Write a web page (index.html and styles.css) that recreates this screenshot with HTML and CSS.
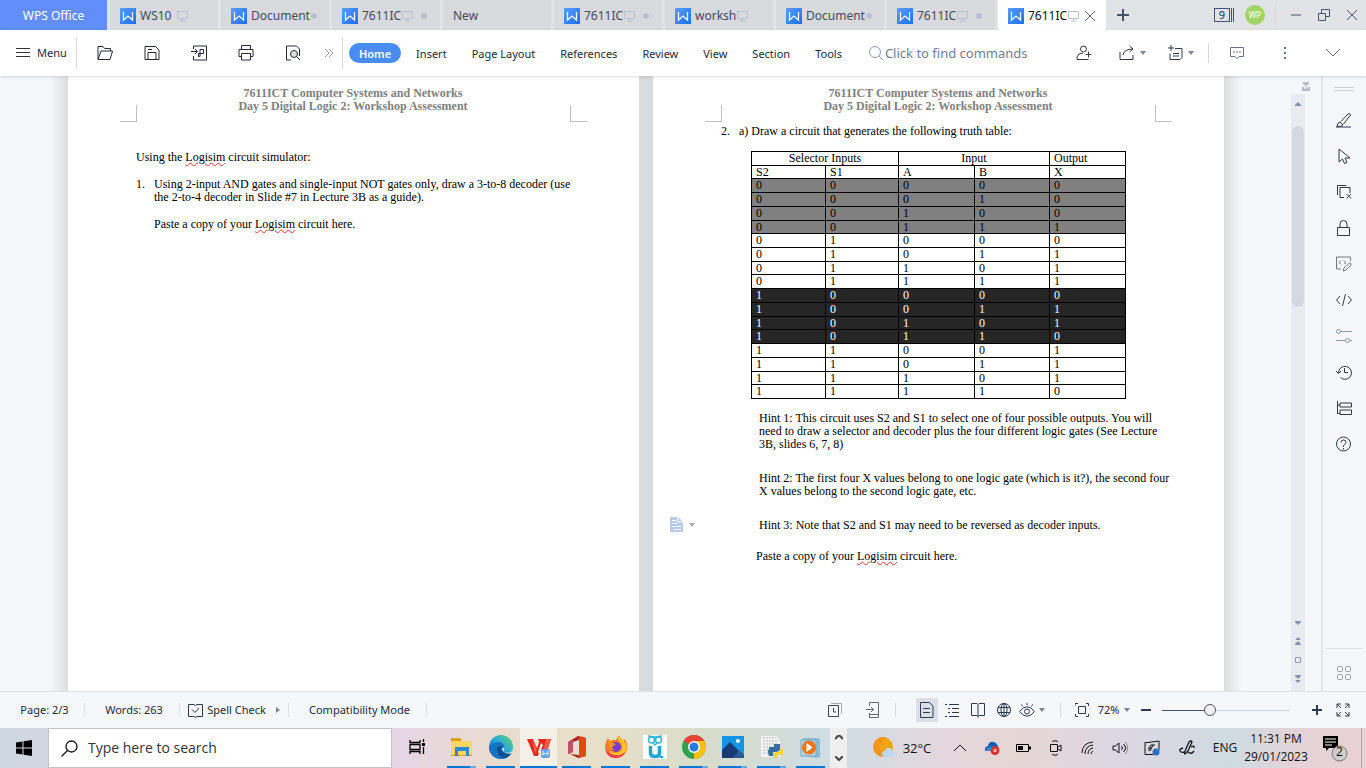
FILE: index.html
```html
<!DOCTYPE html>
<html lang="en">
<head>
<meta charset="utf-8">
<title>WPS Office - Workshop Assessment</title>
<link rel="stylesheet" href="styles.css">
</head>
<body>
<svg width="0" height="0" class="defs" aria-hidden="true">
  <defs>
    <linearGradient id="wg" x1="0" y1="0" x2="1" y2="1"><stop offset="0" stop-color="#5b9dfa"/><stop offset="1" stop-color="#1b6df2"/></linearGradient>
    <symbol id="w" viewBox="0 0 16 16"><path fill="url(#wg)" d="M0 0h16v16H0z"/><path d="M3.500 4v8L8 8l4.500 4V4" fill="none" stroke="#fff" stroke-width="1.300"/></symbol>
    <symbol id="mon" viewBox="0 0 12 12"><path d="M.5 1.500h10v7H.5zM5.500 8.500v2M3 11h5.500" fill="none" stroke="#b9c0d4"/></symbol>
  </defs>
</svg>

<header class="titlebar">
  <button class="office">WPS Office</button>
  <nav class="tabs">
    <button class="tab"><svg class="w"><use href="#w"/></svg><span>WS10</span><svg class="mon far"><use href="#mon"/></svg></button>
    <button class="tab"><svg class="w"><use href="#w"/></svg><span>Document</span><i class="dot"></i></button>
    <button class="tab"><svg class="w"><use href="#w"/></svg><span>7611IC</span><svg class="mon"><use href="#mon"/></svg><i class="dot end"></i></button>
    <button class="tab"><span>New</span></button>
    <button class="tab"><svg class="w"><use href="#w"/></svg><span>7611IC</span><svg class="mon"><use href="#mon"/></svg><i class="dot end"></i></button>
    <button class="tab"><svg class="w"><use href="#w"/></svg><span>worksh</span><svg class="mon"><use href="#mon"/></svg></button>
    <button class="tab"><svg class="w"><use href="#w"/></svg><span>Document</span><i class="dot"></i></button>
    <button class="tab"><svg class="w"><use href="#w"/></svg><span>7611IC</span><svg class="mon"><use href="#mon"/></svg><i class="dot end"></i></button>
    <button class="tab active"><svg class="w"><use href="#w"/></svg><span>7611IC</span><svg class="mon"><use href="#mon"/></svg><svg class="x" viewBox="0 0 12 12"><path d="M1 1l10 10M11 1L1 11"/></svg></button>
  </nav>
  <button class="plus" aria-label="New tab"><svg width="12" height="12"><path d="M6 0v12M0 6h12" stroke="#44546f" stroke-width="2"/></svg></button>
  <div class="win">
    <button class="count"><b>9</b></button>
    <button class="avatar">WP</button>
    <i class="vline"></i>
    <button aria-label="Minimize"><svg width="12" height="12"><path d="M1 6h10"/></svg></button>
    <button aria-label="Restore"><svg width="12" height="12"><path d="M.5 4.500h7v7h-7zM3.500 4V.5h8v7H8"/></svg></button>
    <button aria-label="Close"><svg width="12" height="12"><path d="M1 1l10 10M11 1L1 11"/></svg></button>
  </div>
</header>

<div class="ribbon">
  <button class="menu"><svg width="14" height="10"><path d="M0 .5h14M0 4.500h14M0 8.500h14" stroke="#333"/></svg>Menu</button>
  <div class="quick">
    <button aria-label="Open"><svg viewBox="0 0 16 16"><path d="M1 14V1.500h5l1.500 2h6V6M1 14.500l3-8.500h11.500L13 14.500z"/></svg></button>
    <button aria-label="Save"><svg viewBox="0 0 16 16"><path d="M1 1.500h10.500L15 5v9.500H1zM4 14.500V7.500h8v7M4 4.500h4"/></svg></button>
    <button aria-label="Export to PDF"><svg viewBox="0 0 16 16"><path d="M2.500 4V1h13v14h-13v-4M0 6.500h6M4 4l2.500 2.500L4 9M9 11.500V4.500h3.500v4H7.500v3z"/></svg></button>
    <button aria-label="Print"><svg viewBox="0 0 16 16"><path d="M3.500 4.500v-4h9v4M3.500 11.500h-2.500v-7h14v7h-2.500M3.500 8.500h9v6.500h-9z"/></svg></button>
    <button aria-label="Print preview"><svg viewBox="0 0 16 16"><path d="M6 15H1.500V1h10l3 3v7"/><circle cx="9" cy="9" r="3.500" fill="#ddd"/><path d="M11.500 11.500L15 15"/></svg></button>
    <button class="more" aria-label="More"><svg viewBox="0 0 10 10"><path d="M1 1l4 4-4 4M5 1l4 4-4 4"/></svg></button>
  </div>
  <nav class="menus">
    <button class="home">Home</button><button>Insert</button><button>Page Layout</button><button>References</button><button>Review</button><button>View</button><button>Section</button><button>Tools</button>
  </nav>
  <label class="find"><svg width="15" height="15"><circle cx="6" cy="6" r="5.500"/><path d="M10 10l4 4"/></svg><input aria-label="Click to find commands" placeholder="Click to find commands"></label>
  <div class="share">
    <button aria-label="Collaborate"><svg width="16" height="16"><circle cx="7.500" cy="4" r="3"/><path d="M9 14.500H1V12q1-4 6-4M9 14.500h3.500M12.500 6.500v6M9.500 9.500h6"/></svg></button>
    <button aria-label="Share"><svg width="16" height="16"><path d="M1 7v7.500h13V10M4 10q1-6 10-6M10.500 1l3.500 3-3.500 3"/></svg><i class="caret"></i></button>
    <button aria-label="Notes"><svg width="16" height="16"><path d="M4 0v6M1 3h6M8 3.500h7v9l-2 2H3v-6M6 8.500h6M6 11h6"/></svg><i class="caret"></i></button>
    <i class="vline"></i>
    <button class="soft" aria-label="Comments"><svg width="16" height="16"><path d="M1.500 2.500h13v9h-4.500l-2 2-2-2H1.500zM4 7h2M7 7h2M10 7h2"/></svg></button>
    <button class="soft" aria-label="Options"><svg width="4" height="14"><path d="M2 1v2M2 6v2M2 11v2" stroke-width="2"/></svg></button>
    <button class="soft" aria-label="Collapse ribbon"><svg width="14" height="8"><path d="M0 0l7 7 7-7"/></svg></button>
  </div>
</div>

<main class="work">
  <div class="canvas">
    <i class="shade left"></i>
    <article class="page">
      <i class="mark tl"></i><i class="mark tr"></i>
      <header class="head">7611ICT Computer Systems and Networks<br>Day 5 Digital Logic 2: Workshop Assessment</header>
      <p class="intro">Using the <u>Logisim</u> circuit simulator:</p>
      <div class="item"><span>1.</span><div><p>Using 2-input AND gates and single-input NOT gates only, draw a 3-to-8 decoder (use<br>the 2-to-4 decoder in Slide #7 in Lecture 3B as a guide).</p><p class="next">Paste a copy of your <u>Logisim</u> circuit here.</p></div></div>
    </article>
    <article class="page">
      <i class="mark tl"></i><i class="mark tr"></i>
      <header class="head">7611ICT Computer Systems and Networks<br>Day 5 Digital Logic 2: Workshop Assessment</header>
      <div class="item second"><span>2.</span><p>a) Draw a circuit that generates the following truth table:</p></div>
      <table class="truth">
        <colgroup><col class="c1"><col class="c2"><col class="c3"><col class="c4"><col class="c5"></colgroup>
        <tr><th colspan="2" class="mid">Selector Inputs</th><th colspan="2" class="mid">Input</th><th>Output</th></tr>
        <tr><th>S2</th><th>S1</th><th>A</th><th>B</th><th>X</th></tr>
        <tr class="gray"><td>0</td><td>0</td><td>0</td><td>0</td><td>0</td></tr>
        <tr class="gray"><td>0</td><td>0</td><td>0</td><td>1</td><td>0</td></tr>
        <tr class="gray"><td>0</td><td>0</td><td>1</td><td>0</td><td>0</td></tr>
        <tr class="gray"><td>0</td><td>0</td><td>1</td><td>1</td><td>1</td></tr>
        <tr><td>0</td><td>1</td><td>0</td><td>0</td><td>0</td></tr>
        <tr><td>0</td><td>1</td><td>0</td><td>1</td><td>1</td></tr>
        <tr><td>0</td><td>1</td><td>1</td><td>0</td><td>1</td></tr>
        <tr><td>0</td><td>1</td><td>1</td><td>1</td><td>1</td></tr>
        <tr class="black"><td>1</td><td>0</td><td>0</td><td>0</td><td>0</td></tr>
        <tr class="black"><td>1</td><td>0</td><td>0</td><td>1</td><td>1</td></tr>
        <tr class="black"><td>1</td><td>0</td><td>1</td><td>0</td><td>1</td></tr>
        <tr class="black"><td>1</td><td>0</td><td>1</td><td>1</td><td>0</td></tr>
        <tr><td>1</td><td>1</td><td>0</td><td>0</td><td>1</td></tr>
        <tr><td>1</td><td>1</td><td>0</td><td>1</td><td>1</td></tr>
        <tr><td>1</td><td>1</td><td>1</td><td>0</td><td>1</td></tr>
        <tr><td>1</td><td>1</td><td>1</td><td>1</td><td>0</td></tr>
      </table>
      <p class="hint">Hint 1: This circuit uses S2 and S1 to select one of four possible outputs. You will<br>need to draw a selector and decoder plus the four different logic gates (See Lecture<br>3B, slides 6, 7, 8)</p>
      <p class="hint">Hint 2: The first four X values belong to one logic gate (which is it?), the second four<br>X values belong to the second logic gate, etc.</p>
      <p class="hint">Hint 3: Note that S2 and S1 may need to be reversed as decoder inputs.
        <button class="para" aria-label="Paragraph layout"><svg width="13" height="15"><path d="M0 0h8l5 5v10H0z" fill="#b8cbe8"/><path d="M8 0v5h5M2 3.500h4M2 6.500h5M2 9.500h9M4 12.500h7" stroke="#fff" fill="none"/></svg><i class="caret"></i></button></p>
      <p class="paste">Paste a copy of your <u>Logisim</u> circuit here.</p>
    </article>
    <i class="shade right"></i>
  </div>
  <div class="scroll">
    <svg class="ruler" width="8" height="9"><path d="M1 0h6v2L4 4 1 2zM3.500 3h1v3h-1zM0 5h2v2h1V6h2v1h1V5h2v4H0z" fill="#b3bad0"/></svg>
    <div class="track">
      <svg width="6" height="4"><path d="M0 4V3l3-3 3 3v1z"/></svg>
      <i class="thumb"></i>
      <div class="nav">
        <svg width="6" height="4"><path d="M0 0v1l3 3 3-3V0z"/></svg>
        <svg width="6" height="8"><path d="M0 3l3-3 3 3zM0 8V7l3-3 3 3v1z"/></svg>
        <svg class="box" width="6" height="6"><path d="M.5.500h5v5h-5z"/></svg>
        <svg width="6" height="8"><path d="M0 0v1l3 3 3-3V0zM0 5l3 3 3-3z"/></svg>
      </div>
    </div>
  </div>
  <aside class="side">
    <i class="grip"></i>
    <button aria-label="Draw"><svg viewBox="0 0 16 16"><path d="M0 15h15M1 14.500q0-4 3-4.500l3 3q-2 2-6 1.500M5 9.500L12 2q2-1.500 2.500 1L7.500 12"/></svg></button>
    <button aria-label="Select"><svg viewBox="0 0 16 16"><path d="M3 1v13l3.500-3 2 4.500 2.500-1-2-4.500H14z"/></svg></button>
    <button aria-label="Layers"><svg viewBox="0 0 16 16"><path d="M1.500 11V1.500h9M8 13.500H4v-10h10V9M10.500 10l4.500 4.500M15 10l-4.500 4.500"/></svg></button>
    <button aria-label="Protect"><svg viewBox="0 0 16 16"><path d="M1.500 7.500h12v8h-12zM4 7.500V4q0-3.500 3.500-3.500T11 4v3.500"/></svg></button>
    <button class="s2" aria-label="Edit field"><svg viewBox="0 0 16 16"><path d="M5 13H.5V1h14v4M5 4.500L3 6.500l2 2M8 4.500l2 2-2 1.500M7 15l1-3 5.500-5q2 0 1.500 2L10 14z"/></svg></button>
    <button aria-label="Code"><svg viewBox="0 0 16 16"><path d="M4 4L.500 8 4 12M12 4l3.500 4-3.500 4M9.500 2l-3 12"/></svg></button>
    <button class="s3" aria-label="Settings"><svg viewBox="0 0 16 16"><circle cx="2.500" cy="3.500" r="2"/><circle cx="11.500" cy="12.500" r="2"/><path d="M5 3.500h11M0 12.500h9.500M13.500 12.500H16"/></svg></button>
    <button aria-label="History"><svg viewBox="0 0 16 16"><path d="M2.500 9a6.500 6.500 0 1 1 2 4.500M0 7l2.500 2.500L5 7M8.500 4v4.500H12"/></svg></button>
    <button aria-label="Structure"><svg viewBox="0 0 16 16"><path d="M1.500 1v12.500H4M1.500 5H4M4 3h11.500v4H4zM4 10h11.500v4.500H4z"/></svg></button>
    <button aria-label="Help"><svg viewBox="0 0 16 16"><circle cx="7.500" cy="8" r="7"/><path d="M5 6.500Q5 4 7.500 4T10 6.500q0 1-2.500 3V11M7.500 12v1.500"/></svg></button>
    <div class="bottom"><button class="s4" aria-label="Apps"><svg viewBox="0 0 16 16"><rect x="1.500" y="1.500" width="5" height="5" rx="1"/><rect x="9.500" y="1.500" width="5" height="5" rx="1"/><rect x="1.500" y="9.500" width="5" height="5" rx="1"/><rect x="9.500" y="9.500" width="5" height="5" rx="1"/></svg></button></div>
  </aside>
</main>

<footer class="status">
  <button class="st pg">Page: 2/3</button>
  <button class="st wd">Words: 263</button>
  <button class="st sp"><svg width="15" height="15"><path d="M.5 1.500H6l1.500 1L9 1.500h5.500v12H9l-1.500 1-1.500-1H.5zM4 6.500L7 9.500l4-4.500"/></svg>Spell Check<i class="tri"></i></button>
  <button class="st cm">Compatibility Mode</button>
  <div class="views">
    <button aria-label="History"><svg width="14" height="14"><path d="M3 .5h10.500V11" stroke="#aaa"/><path d="M.5 2.500h10v11H.5zM5.500 5v4H8" stroke="#444"/></svg></button>
    <button class="gap" aria-label="Mobile"><svg width="14" height="16"><path d="M3.500 4V.5h9v15h-9V11M0 7.500h7M5 5l2.500 2.500L5 10M4 12.500h8" stroke="#666"/></svg></button>
    <i class="vline"></i>
    <button class="on" aria-label="Print layout"><svg width="14" height="16"><path d="M.5.500h9L13 4v11.500H.5zM3 6.500h7M3 10.500h7"/></svg></button>
    <button aria-label="Outline"><svg width="14" height="14"><path d="M0 1.500h2M4 1.500h10M3 5.500h2M7 5.500h7M3 9.500h2M7 9.500h7M0 13.500h2M4 13.500h10"/></svg></button>
    <button aria-label="Reading"><svg width="14" height="15"><path d="M.5.500H6l1 1 1-1h5.500v12H8l-1 1-1-1H.5zM7 1.500v13"/></svg></button>
    <button aria-label="Web"><svg width="14" height="14"><circle cx="7" cy="7" r="6.500"/><ellipse cx="7" cy="7" rx="3" ry="6.500"/><path d="M1 4.500h12M1 9.500h12M7 0v14"/></svg></button>
    <button class="eye" aria-label="Eye protection"><svg width="16" height="14"><path d="M.5 8.500Q8-1 15.500 8.500 8 18 .5 8.500M8 0v2M2.500 1.500l1 2M13.500 1.500l-1 2"/><circle cx="8" cy="8.500" r="2.500"/></svg><i class="caret"></i></button>
    <i class="vline last"></i>
    <button aria-label="Fit page"><svg width="14" height="14"><path d="M0 3V.5h3M11 .5h2.500V3M13.500 11v2.500H11M3 13.500H.5V11M3.500 3.500h7v7h-7z"/></svg></button>
    <button class="pct">72%<i class="caret"></i></button>
    <button aria-label="Zoom out"><svg width="10" height="10"><path d="M0 5h10" stroke-width="2"/></svg></button>
    <input class="zoom" type="range" aria-label="Zoom" min="0" max="100" value="36">
    <button aria-label="Zoom in"><svg width="10" height="10"><path d="M0 5h10M5 0v10" stroke-width="2"/></svg></button>
    <button aria-label="Full screen"><svg width="14" height="14"><path d="M1 5V1h4M9 1h4v4M13 9v4H9M5 13H1V9M1 1l4 4M13 1L9 5M13 13L9 9M1 13l4-4"/></svg></button>
  </div>
</footer>

<div class="taskbar">
  <button class="start" aria-label="Start"><svg width="16" height="16"><path d="M0 2.500L6.500 1.500v6H0zM7.500 1.300L16 0v7.500H7.500zM0 8.500h6.500v6L0 13.500zM7.500 8.500H16V16l-8.500-1.300z"/></svg></button>
  <label class="search"><svg width="17" height="17"><circle cx="10.500" cy="6.500" r="5.500"/><path d="M6.500 10.500L.500 16.500"/></svg><input aria-label="Type here to search" placeholder="Type here to search"></label>
  <div class="apps">
    <button class="tv" aria-label="Task view"><svg width="17" height="16"><path d="M1 1v2.500h10V1M1 15v-2.500h10V15M1 5.500h10v5H1zM14.500 0v3M14.500 8v7" fill="none" stroke="#000" stroke-width="1.300"/><path d="M13 4h3v3h-3z"/></svg></button>
    <button class="two" aria-label="File Explorer"><svg viewBox="0 0 24 24"><path d="M1 3h9l2 3h10v15H1z" fill="#e0a00c"/><path d="M1 6h21v14H1z" fill="#fdd663"/><path d="M5 21v-9h14v9h-3v-5H8v5z" fill="#3186d6"/></svg></button>
    <button aria-label="Edge"><svg viewBox="0 0 24 24"><defs><linearGradient id="ed" x1="0" y1="1" x2="1" y2="0"><stop offset="0" stop-color="#0c59a4"/><stop offset=".5" stop-color="#24a4e4"/><stop offset="1" stop-color="#65d86a"/></linearGradient></defs><circle cx="12" cy="12" r="12" fill="url(#ed)"/><path d="M0 13Q3 6 10 7q6 1 5 6-2 2-1 3 4 4 9 1-3 7-11 7Q1 23 0 13z" fill="#1474c4"/><path d="M8 13q-1 9 8 10 5-2 7-6-7 4-10-1-1-2 1-4-4-2-6 1z" fill="#114d91"/><path d="M14 16q-2-2 0-4 2 3 1 5 6 2 8-1v2q-5 2-9-2z" fill="#e4e4d5"/></svg></button>
    <button class="cur" aria-label="WPS Office"><svg viewBox="0 0 24 24"><path d="M0 4h6l4 9 3-9h5l-7 17H7zM15 4h9l-5 16h-3l-3-8z" fill="#e5281f"/><path d="M5 4l5 9-2 6zM19 4h5l-5 15-2-7z" fill="#ff5a3c"/><path d="M11 4h8l-1 3h-6z" fill="#e5281f"/><path d="M14 8l-3 9 1 2 4-9z" fill="#f6f1e8"/><rect x="14" y="14" width="9" height="9" rx="2" fill="#6d9dff"/><path d="M16 16v4l2.500-2 2.500 2v-4" fill="none" stroke="#fff"/></svg></button>
    <button aria-label="Office"><svg viewBox="0 0 24 24"><path d="M3 7l10-6 8 2v18l-8 2-8-4 9 1V5L8 7v10l-5 2z" fill="#b3261e"/><path d="M14 1l7 2v18l-7 2z" fill="#e64a0b"/><path d="M3 7l5-3v13l-5 2z" fill="#c2506a"/></svg></button>
    <button aria-label="Firefox"><svg viewBox="0 0 24 24"><path d="M4 3l2 3q3-2 6-1 2-4 4-4 0 3 4 5l1-2q4 8 1 13-4 7-11 6Q2 22 1 14 1 7 4 3z" fill="#ff7b24"/><path d="M14 1q-1 5 3 7 3 6-2 9-5 2-8-1-2 4 2 5 13 3 14-9-1-6-9-11z" fill="#ffc329"/><path d="M2 14q1 9 9 9 8 0 11-7-4 5-11 4-7-1-9-6z" fill="#f43a55"/><circle cx="12" cy="12" r="5" fill="#7140d2"/><path d="M3 7q4-2 6 1l3 1-4 3q0 2 3 3-6 1-8-8z" fill="#ff8e23"/></svg></button>
    <button aria-label="Owl"><svg viewBox="0 0 24 24"><path d="M0 0h24v24H0z" fill="#fff"/><g fill="none" stroke="#35b4d6" stroke-width="1.500"><circle cx="8.500" cy="5" r="3"/><circle cx="15.500" cy="5" r="3"/><path d="M5 1l7 1 7-1M10 8l2 2 2-2"/></g><path d="M7.500 11v7q0 3.500 4.500 3.500t4.500-3.500v-7" fill="none" stroke="#20a6cf" stroke-width="3.500"/><path d="M17 22h3" stroke="#20a6cf" stroke-width="2"/></svg></button>
    <button class="two" aria-label="Chrome"><svg viewBox="0 0 24 24"><circle cx="12" cy="12" r="12" fill="#2da44f"/><path d="M12 12L1.600 6A12 12 0 0 1 22.400 6z" fill="#ea4335"/><path d="M12 12V6h10.400A12 12 0 0 1 12 24z" fill="#fbc116"/><circle cx="12" cy="12" r="6" fill="#fff"/><circle cx="12" cy="12" r="4.500" fill="#2979e8"/></svg></button>
    <button class="two" aria-label="Photos"><svg viewBox="0 0 24 24"><path d="M1 1h22v22H1z" fill="#1694e2"/><path d="M1 15l8-8 14 14v2H1z" fill="#173b72"/><path d="M12 23l6-8 5 5v3z" fill="#2b5897"/><circle cx="17" cy="6" r="2" fill="#fff"/></svg></button>
    <button class="two" aria-label="Python"><svg viewBox="0 0 24 24"><path d="M1 1h15l4 4v17H1z" fill="#f2f2f2"/><path d="M3 3h13M3 6h15M3 9h15M3 12h15M3 15h15M3 18h15" stroke="#bbb" stroke-dasharray="2 1"/><path d="M9 14V12h5V9h6v5q0 3-5 3h-2v4H9q-2-5 0-7z" fill="#356f9f"/><path d="M23 14v6h-5v3h-5v-4q0-2 4-2h3v-3z" fill="#ffd43b"/></svg></button>
    <button aria-label="Media player"><svg viewBox="0 0 24 24"><path d="M4 3h15l2 1v18l-3 1-14-2z" fill="#8dbdd6"/><path d="M2 5h15v16H2z" fill="#b2d5e7" stroke="#6fa9c9"/><circle cx="10" cy="12.500" r="7" fill="#ef761c"/><path d="M7.500 8v9l6-4.500z" fill="#fff"/></svg></button>
    <div class="spin"><svg width="8" height="5"><path d="M0 4l4-4 4 4"/></svg><svg width="8" height="5"><path d="M0 0l4 4 4-4"/></svg></div>
  </div>
  <div class="tray">
    <button class="weather"><svg width="22" height="22"><circle cx="10" cy="10" r="10" fill="#f6a313"/><path d="M13 0a10 10 0 1 0 5 16Q8 18 6 9z" fill="#f28a1c" opacity=".5"/><path d="M9 17q0-3 3-3 1-4 4-3 3 0 3 3 3 1 2 4-1 2-3 2h-6q-3 0-3-3z" fill="#bcd7f7"/></svg>32°C</button>
    <button aria-label="Hidden icons"><svg width="12" height="8" class="ln"><path d="M0 7l6-6 6 6"/></svg></button>
    <button aria-label="OneDrive"><svg width="16" height="14"><path d="M1 10Q0 6 4 5q1-5 6-4 3 1 4 4l1 5z" fill="#0a62b5"/><path d="M1 10q3-5 9-4l3 4z" fill="#2b8de0"/><circle cx="11" cy="9.500" r="4.500" fill="#d5332b"/><path d="M9.500 8l3 3m0-3l-3 3" stroke="#fff"/></svg></button>
    <button aria-label="Battery"><svg width="16" height="10"><path d="M.5 1.500h12v7H.5z" fill="none" stroke="#000"/><path d="M2 3h5v4H2zM13 3.500h2v3h-2z"/></svg></button>
    <button aria-label="Meet now"><svg width="14" height="16" class="ln"><path d="M1.500 4.500h7v7h-7zM9 7l3-2v6L9 9M3 1.500q3-1.500 6 0M3 14.500q3 1.500 6 0"/></svg></button>
    <button aria-label="Wi-Fi"><svg width="14" height="14" class="ln"><path d="M1 12Q1 2 12 1M4 13q0-8 8-9M7 13q0-5 5-6M10 13q0-2 2-3"/></svg></button>
    <button aria-label="Volume"><svg width="16" height="14" class="ln"><path d="M1 5h2.500L7 2v10L3.500 9H1zM9.500 5q2 2 0 4M11.500 3q4 4 0 8"/><path d="M13.500 1q4 6 0 12" stroke="#888"/></svg></button>
    <button aria-label="Update"><svg width="17" height="16" class="ln"><path d="M4 2.500H1v12h8M4 2.500L15 1v9M5 11V8h3M5 8l2-3h4M9 5l-3 6"/><circle cx="12" cy="12" r="3.500" fill="#2a70bf" stroke="none"/></svg></button>
    <button class="pen" aria-label="Pen"><svg width="16" height="16" class="ln"><path d="M4 8q-4 1-3 3t5 1M6 14q-1-1 0-3L10 2q2-2 3 0l-4 9zM9 12q3 3 6-1M12 7q4-2 3 1" stroke-width="1.300"/></svg></button>
    <button class="lang">ENG</button>
    <button class="clock">11:31 PM<br>29/01/2023</button>
    <button class="note" aria-label="Notifications"><svg width="26" height="28"><path d="M1 2h15v12H7l-3 3v-3H1z"/><path d="M3 5h11M3 8h11M3 11h7" stroke="#fff"/><circle cx="17.500" cy="19.500" r="7.500" fill="#ccc" stroke="#777"/></svg><span>2</span></button>
  </div>
</div>
</body>
</html>
```
FILE: styles.css
```css
* { box-sizing: border-box; }
html, body { height: 100%; margin: 0; }
body { display: flex; flex-direction: column; overflow: hidden; background: #f5f7fa; color: #222b3c; font: 12px/16px "Noto Sans", sans-serif; }
button { padding: 0; border: 0; background: none; color: inherit; font: inherit; display: flex; align-items: center; justify-content: center; flex: none; white-space: nowrap; }
input { border: 0; background: none; font: inherit; outline: 0; padding: 0; min-width: 0; }
svg { flex: none; display: block; }
p { margin: 0; }
.defs { position: absolute; }
.vline { width: 1px; background: #d5d8df; flex: none; }
.caret { border: 3px solid transparent; border-top: 4px solid #77839b; border-bottom: 0; }

/* Title bar */
.titlebar { display: flex; height: 30px; flex: none; background: #e2e3e7; }
.office { width: 107px; padding-top: 2px; background: #628efb; color: #fff; }
.tabs { display: flex; gap: 3px; margin-left: 3px; }
.tab { width: 108px; padding: 2px 10px 0; justify-content: flex-start; background: #d9dadd; color: #45495c; }
.tab .w + span { margin-left: 4px; }
.tab.active { background: #fff; color: #111; }
.w { width: 16px; height: 16px; }
.mon { width: 12px; height: 12px; margin-left: 1px; }
.mon.far { margin-left: 6px; }
.dot { width: 6px; height: 6px; border-radius: 3px; background: #b9c0d8; margin-left: 1px; }
.dot.end { margin-left: auto; margin-right: 3px; }
.x { width: 12px; height: 12px; margin-left: auto; stroke: #5b6980; fill: none; }
.plus { width: 34px; }
.win { display: flex; align-items: center; margin-left: auto; }
.win svg { fill: none; stroke: #44546f; }
.win button { width: 28px; height: 28px; }
.win .count { width: 20px; height: 14px; justify-content: flex-start; border-right: 1px solid #44546f; margin-right: 11px; }
.count b { width: 16px; height: 14px; border: 1px solid #44546f; font: 11px/12px "Noto Sans", sans-serif; box-shadow: 1px 0 #e2e3e7, 2px 0 #44546f; }
.win .avatar { width: 20px; height: 20px; border-radius: 10px; background: #a3d468; color: #fff; font-size: 8px; }
.win .vline { height: 20px; margin: 0 6px 0 10px; }

/* Ribbon */
.ribbon { display: flex; align-items: center; height: 46px; flex: none; background: #fff; z-index: 2; box-shadow: 0 1px 3px #00000022; }
.menu { width: 77px; height: 32px; padding-left: 16px; gap: 7px; justify-content: flex-start; border-right: 1px solid #d9dbe2; font-size: 11px; }
.quick { display: flex; align-items: center; height: 32px; padding-left: 4px; border-right: 1px solid #d9dbe2; }
.quick button { width: 47px; }
.quick svg { width: 16px; height: 16px; fill: none; stroke: #222b3c; }
.quick .more { width: 26px; }
.quick .more svg { width: 10px; height: 10px; stroke: #999; }
.menus { display: flex; gap: 5px; margin-left: 6px; font-size: 11px; }
.menus button { padding: 2px 10px 0; height: 20px; }
.menus .home { background: #4a8df2; color: #fff; border-radius: 10px; font-weight: 600; }
.find { display: flex; align-items: center; gap: 1px; margin-left: 17px; flex: 0 1 190px; min-width: 0; }
.find svg { fill: none; stroke: #8b97b0; }
.find input { flex: 1; color: #6f7d99; font-size: 13px; }
input::placeholder { color: #6f7d99; opacity: 1; }
.share { display: flex; align-items: center; margin-left: auto; padding-right: 9px; }
.share button { width: 48px; gap: 5px; }
.share svg { fill: none; stroke: #333a48; }
.share .soft svg { stroke: #6b7180; }
.share .vline { height: 20px; margin: 0 4px 0 4px; }

/* Workspace */
.work { display: flex; flex: 1; min-height: 0; }
.canvas { display: flex; justify-content: center; flex: 1; min-width: 0; padding-left: 1px; background: #f5f7fa; }
.shade { width: 18px; flex: none; }
.shade.left { background: linear-gradient(90deg, #f5f7fa, #dcddde); }
.shade.right { background: linear-gradient(90deg, #dcddde, #f5f7fa); }
.page { position: relative; flex: 0 1 571px; min-width: 0; padding: 11px 69px 0 68px; background: #fff; color: #000; font: 12px/13px "Liberation Serif", serif; }
.page + .page { box-shadow: -14px 0 #d9dbdd; margin-left: 14px; }
.mark { position: absolute; top: 29px; width: 17px; height: 17px; border: 0 solid #c0c0c0; border-bottom-width: 1px; }
.mark.tl { left: 52px; border-right-width: 1px; }
.mark.tr { right: 52px; border-left-width: 1px; }
.head { text-align: center; color: #808080; font-weight: bold; }
.intro { margin-top: 38px; }
.item { display: flex; margin-top: 14px; white-space: nowrap; }
.item > span { width: 18px; flex: none; }
.item.second { margin-top: 12px; }
.next { margin-top: 14px; }
u { text-decoration: underline wavy #e33 1px; text-underline-offset: 1px; }
.truth { width: 375px; height: 248px; margin: 13px 0 13px 30px; border-collapse: collapse; table-layout: fixed; line-height: 12px; }
.truth th, .truth td { padding: 0 4px; border: 1px solid #000; text-align: left; font-weight: normal; vertical-align: top; }
.truth .mid { text-align: center; }
.c1 { width: 74px; } .c2 { width: 73px; } .c3 { width: 76px; } .c4 { width: 75px; } .c5 { width: 76px; }
.gray { background: #808080; }
.black { background: #262626; color: #fff; }
.hint { position: relative; margin: 0 0 21px 38px; white-space: nowrap; }
.paste { margin: -3px 0 0 35px; }
.para { position: absolute; left: -89px; top: -2px; gap: 6px; }
.para .caret { border-top-color: #aaa; }
.scroll { width: 30px; flex: none; display: flex; flex-direction: column; background: #f5f7fa; }
.ruler { margin: 6px 0 3px 11px; }
.track { display: flex; flex-direction: column; align-items: center; flex: 1; width: 14px; padding: 8px 0; background: #e9ebf1; fill: #8293b0; }
.thumb { width: 12px; height: 181px; margin-top: 20px; border-radius: 6px; background: #d5d8e1; }
.nav { display: flex; flex-direction: column; gap: 12px; margin-top: auto; }
.box { fill: none; stroke: #8d9cb8; }

/* Side tools */
.side { display: flex; flex-direction: column; align-items: center; width: 45px; flex: none; border-left: 2px solid #e2e4ea; padding: 11px 1px 0 0; }
.grip { width: 20px; height: 4px; border: 1px solid #ccc; border-width: 1px 0; margin-bottom: 11px; }
.side button { width: 36px; height: 36px; }
.side svg { width: 16px; height: 16px; fill: none; stroke: #30374a; }
.side .s2 svg { stroke: #777; }
.side .s3 svg { stroke: #8d97ab; }
.side .s4 svg { stroke: #999; }
.bottom { margin-top: auto; border-top: 1px solid #dcdfe5; padding: 6px 1px 0; }

/* Status bar */
.status { display: flex; align-items: center; height: 37px; flex: none; border-top: 1px solid #dfe2e6; background: #f5f7fa; font-size: 11px; }
.status svg { fill: none; stroke: #2c3950; }
.st { height: 14px; border-right: 1px solid #dcdfe5; }
.pg { width: 85px; padding-left: 5px; }
.wd { width: 95px; padding-left: 4px; }
.sp { width: 109px; gap: 4px; }
.cm { width: 138px; padding-left: 4px; }
.tri { border: 3px solid transparent; border-left: 4px solid #77839b; border-right: 0; margin-left: 6px; }
.views { display: flex; align-items: center; margin-left: auto; padding-right: 10px; }
.views button { width: 26px; height: 24px; }
.views .gap { margin-left: 12px; }
.views .vline { height: 14px; margin: 0 20px 0 9px; }
.views .vline.last { margin: 0 8px 0 13px; }
.views .on { width: 22px; background: #dbdfe7; margin-right: 1px; }
.views .eye { width: 30px; gap: 4px; }
.views .pct { width: 38px; gap: 5px; }
.zoom { -webkit-appearance: none; appearance: none; width: 128px; height: 14px; margin: 0 14px 0 3px; background: linear-gradient(90deg, #44546f 38%, #cdd4df 38%) center / 100% 1px no-repeat; }
.zoom::-webkit-slider-thumb { -webkit-appearance: none; width: 12px; height: 12px; border: 1px solid #555; border-radius: 6px; background: #f1f1f1; }

/* Taskbar */
.taskbar { display: flex; height: 40px; flex: none; color: #111; font: 12px/18px "Open Sans", sans-serif; background: linear-gradient(90deg, #cfd7e1, #d5dae4 25%, #e6d5e6 29%, #e9dbd0 36%, #e9e0c8 43%, #d7dccb 52%, #cfdde3 61%, #e4d6df 69%, #e6d6d3 74%, #dcd7e3 82%, #cfdbe2 90%, #e4d3d8 95%, #e8d1d6); }
.start { width: 48px; }
.search { display: flex; align-items: center; gap: 10px; width: 344px; flex: 0 1 344px; min-width: 0; padding-left: 12px; border: 1px solid #bfc1c4; background: #fff; font-size: 14px; }
.search svg { fill: none; stroke: #111; stroke-width: 1.3; }
.search input::placeholder { color: #333; }
.apps { display: flex; }
.apps button { width: 39px; border-bottom: 2px solid transparent; }
.apps button svg { width: 24px; height: 24px; }
.apps button:not(.tv) { width: 29px; margin: 0 5px; border-color: #0078d7; }
.apps .two:not(.tv) { border-image: linear-gradient(90deg, #0078d7 75%, #66a9df 75%) 2; }
.apps .cur:not(.tv) { width: 37px; margin: 0; background: #f6f1e8; }
.apps .tv { width: 50px; }
.apps .tv svg { width: 17px; height: 16px; }
.spin { width: 17px; display: flex; flex-direction: column; align-items: center; justify-content: space-between; padding: 7px 0; background: #efefef; fill: none; stroke: #444; stroke-width: 2; }
.tray { display: flex; margin-left: auto; padding-right: 4px; }
.tray button { width: 32px; }
.ln { fill: none; stroke: #111; }
.tray .weather { width: 72px; gap: 8px; font-size: 13px; margin-right: 6px; }
.tray .pen { width: 38px; }
.tray .lang { width: 38px; }
.tray .clock { width: 64px; line-height: 18px; }
.tray .note { position: relative; width: 54px; border-right: 1px solid #aaa; }
.note span { position: absolute; left: 28px; top: 15px; }
```
